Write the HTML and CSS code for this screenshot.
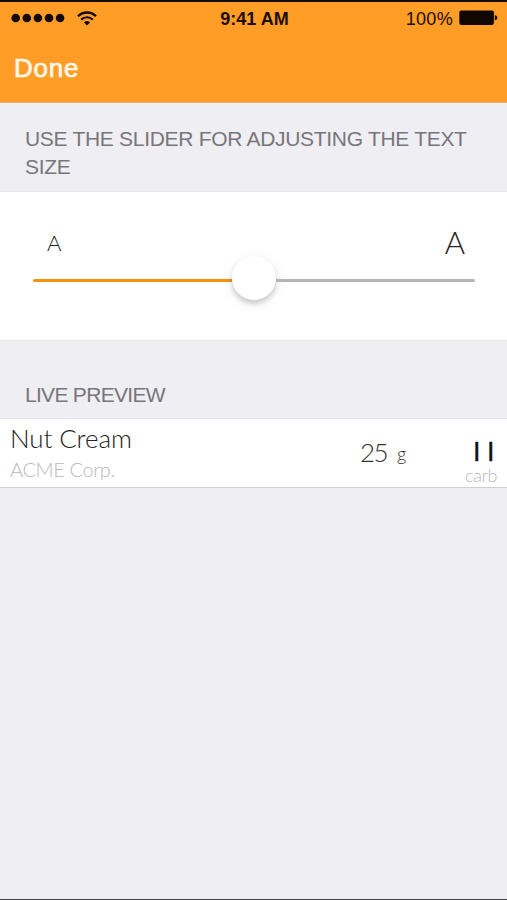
FILE: index.html
```
<!DOCTYPE html>
<html lang="en">
<head>
    <meta charset="utf-8">
    <title>Text Size</title>
    <link rel="stylesheet" href="styles.css">
</head>
<body>
    <header class="top-bar">
        <div class="status-bar">
            <div class="status-left">
                <svg class="signal" width="54" height="10" viewBox="0 0 54 10">
                    <circle cx="4.7" cy="5" r="4.3"/>
                    <circle cx="15.8" cy="5" r="4.3"/>
                    <circle cx="26.9" cy="5" r="4.3"/>
                    <circle cx="38" cy="5" r="4.3"/>
                    <circle cx="49.1" cy="5" r="4.3"/>
                </svg>
                <svg class="wifi" width="20" height="15" viewBox="0 0 20 15">
                    <path d="M1 5.2 A12.8 12.8 0 0 1 19 5.2" fill="none" stroke="#100800" stroke-width="2.3"/>
                    <path d="M4.2 8.6 A8.3 8.3 0 0 1 15.8 8.6" fill="none" stroke="#100800" stroke-width="2.2"/>
                    <path d="M7 11.4 A4.4 4.4 0 0 1 13 11.4 L10 14.4 Z"/>
                </svg>
            </div>
            <span class="time">9:41 AM</span>
            <div class="status-right">
                <span class="percent">100%</span>
                <svg class="battery" width="39" height="16" viewBox="0 0 39 16">
                    <rect x="0.3" y="0.5" width="34.6" height="14.6" rx="2"/>
                    <path d="M35.8 5 Q38.4 5.6 38.4 7.8 Q38.4 10 35.8 10.6 Z"/>
                </svg>
            </div>
        </div>
        <a class="done" href="#">Done</a>
    </header>

    <h2 class="section-title slider-title">USE THE SLIDER FOR ADJUSTING THE TEXT SIZE</h2>

    <section class="slider-panel">
        <div class="slider-labels">
            <span class="small-a">A</span>
            <span class="large-a">A</span>
        </div>
        <div class="slider">
            <div class="track track-on"></div>
            <div class="thumb"></div>
            <div class="track track-off"></div>
        </div>
    </section>

    <h2 class="section-title preview-title">LIVE PREVIEW</h2>

    <section class="food-row">
        <div class="food">
            <div class="food-name">Nut Cream</div>
            <div class="food-brand">ACME Corp.</div>
        </div>
        <div class="amount">
            <span class="amount-value">25</span>
            <span class="amount-unit">g</span>
        </div>
        <div class="carb">
            <div class="carb-value">II</div>
            <div class="carb-label">carb</div>
        </div>
    </section>
</body>
</html>
```

FILE: styles.css
```
/* General */
* {
    box-sizing: border-box;
}

body {
    display: flex;
    flex-direction: column;
    height: 900px;
    margin: 0;
    background-color: #efeef3;
    border-bottom: 1px solid #444347;
    font-family: "Liberation Sans", Arial, sans-serif;
    overflow: hidden;
}

/* Orange header */
.top-bar {
    height: 103px;
    background-color: #ff9d27;
    border-top: 2px solid #170c00;
    border-bottom: 1px solid #e9ae70;
}

.status-bar {
    display: grid;
    grid-template-columns: 1fr auto 1fr;
    align-items: center;
    height: 32px;
    padding: 0 9px 0 11px;
    color: #1a0e00;
    fill: #100800;
    font-size: 18px;
}

.status-left,
.status-right {
    display: flex;
    align-items: center;
}

.status-left {
    gap: 12px;
}

.status-right {
    justify-content: flex-end;
    gap: 6px;
}

.percent {
    padding-top: 2px;
    letter-spacing: 0.3px;
}

.time {
    padding-top: 2px;
    font-weight: bold;
    font-size: 18px;
}

.done {
    display: block;
    margin: 19px 0 0 14px;
    color: #fff8e8;
    font-size: 26px;
    line-height: 30px;
    letter-spacing: 0.8px;
    text-decoration: none;
    -webkit-text-stroke: 0.7px #fff8e8;
}

/* Section headings */
.section-title {
    margin: 0;
    padding-left: 25px;
    color: #77767b;
    font-size: 21px;
    font-weight: normal;
    line-height: 28px;
}

.slider-title {
    height: 88px;
    padding-top: 22px;
    padding-right: 30px;
    letter-spacing: -0.3px;
}

.preview-title {
    height: 77px;
    padding-top: 40px;
    letter-spacing: -0.7px;
}

/* Slider */
.slider-panel {
    height: 150px;
    padding: 36px 32px 0 33px;
    background-color: #fff;
    border-top: 1px solid #e9e8ec;
    border-bottom: 1px solid #e9e8ec;
    font-family: Lato, sans-serif;
    font-weight: 300;
}

.slider-labels {
    display: flex;
    justify-content: space-between;
    height: 28px;
    padding: 0 10px 0 14px;
    color: #222;
}

.small-a {
    font-size: 22px;
    line-height: 29px;
}

.large-a {
    font-size: 31px;
    line-height: 28px;
}

.slider {
    display: flex;
    align-items: center;
    height: 44px;
}

.track {
    flex: 1;
    height: 3px;
    margin-top: 5px;
}

.track-on {
    background-color: #f8930f;
    border-radius: 2px 0 0 2px;
}

.track-off {
    background-color: #b5b5b5;
    border-radius: 0 2px 2px 0;
}

.thumb {
    width: 44px;
    height: 44px;
    background-color: #fff;
    border-radius: 50%;
    box-shadow: 0 4px 5px rgba(0, 0, 0, 0.16), 0 3px 14px rgba(0, 0, 0, 0.08);
}

/* Preview row */
.food-row {
    display: grid;
    grid-template-columns: 360px 90px 1fr;
    height: 70px;
    padding-right: 10px;
    background-color: #fff;
    border-top: 1px solid #e5e4e8;
    border-bottom: 1px solid #d0cfd3;
    font-family: Lato, sans-serif;
    font-weight: 300;
}

.food {
    padding: 3px 0 0 10px;
}

.food-name {
    color: #222;
    font-size: 26px;
    line-height: 32px;
    letter-spacing: -0.1px;
}

.food-brand {
    color: #b8b8b8;
    font-size: 20px;
    line-height: 30px;
    letter-spacing: -0.4px;
}

.amount {
    display: flex;
    gap: 10px;
    padding-top: 17px;
    color: #333;
}

.amount-value {
    font-size: 26px;
    line-height: 32px;
    letter-spacing: -1.5px;
}

.amount-unit {
    font-family: "Open Sans", sans-serif;
    font-size: 17px;
    line-height: 35px;
}

.carb {
    text-align: right;
}

.carb-value {
    height: 46px;
    padding-top: 20px;
    color: #111;
    font-family: "Liberation Sans", Arial, sans-serif;
    font-size: 27px;
    line-height: 26px;
    letter-spacing: 6.5px;
    margin-right: -4px;
    -webkit-text-stroke: 0.3px #111;
}

.carb-label {
    color: #b8b8b8;
    font-size: 18px;
    line-height: 20px;
    letter-spacing: -0.4px;
}
```
